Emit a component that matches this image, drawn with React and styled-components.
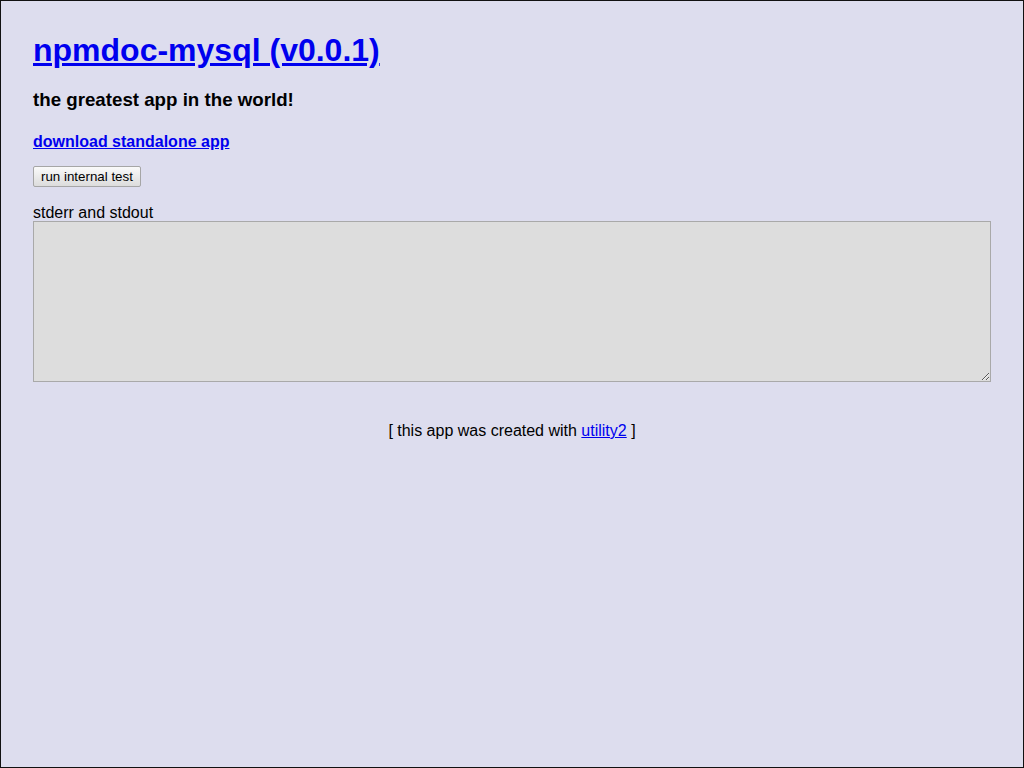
import React from "react";
import styled, { createGlobalStyle } from "styled-components";

const GlobalStyle = createGlobalStyle`
  html, body {
    margin: 0;
    padding: 0;
  }
  body {
    background: #dde;
    font-family: "Liberation Sans", Arial, Helvetica, sans-serif;
  }
`;

const Page = styled.div`
  box-sizing: border-box;
  min-height: 768px;
  border: 1px solid #111;
  padding: 31px 32px 0 32px;
  display: flex;
  flex-direction: column;
  align-items: flex-start;
`;

const Title = styled.h1`
  margin: 0;
  font-size: 32px;
  line-height: 37px;
  font-weight: bold;

  a {
    color: #00e;
  }
`;

const Tagline = styled.h3`
  margin: 20px 0 0 0;
  font-size: 18.72px;
  line-height: 22px;
  font-weight: bold;
  color: #000;
`;

const Download = styled.a`
  margin-top: 22px;
  font-size: 16px;
  line-height: 18px;
  font-weight: bold;
  color: #00e;
  text-decoration: underline;
`;

const TestButton = styled.button`
  margin-top: 15px;
  box-sizing: border-box;
  height: 21px;
  padding: 1px 7px;
  font-family: "Liberation Sans", Arial, sans-serif;
  font-size: 13.33px;
  color: #000;
  background: linear-gradient(#fafafa, #dcdcdc);
  border: 1px solid #a6a6a6;
  border-radius: 2px;
  cursor: pointer;
`;

const Label = styled.label`
  margin-top: 17px;
  font-size: 16px;
  line-height: 17px;
  color: #000;
`;

const Output = styled.textarea`
  box-sizing: border-box;
  width: 100%;
  height: 161px;
  margin: 0;
  background: #ddd;
  border: 1px solid #a9a9a9;
  font-family: "Liberation Mono", "Courier New", monospace;
  font-size: small;
  padding: 5px;
  resize: vertical;
  display: block;
`;

const Footer = styled.div`
  align-self: stretch;
  margin-top: 40px;
  text-align: center;
  font-size: 16px;
  line-height: 18px;
  color: #000;

  a {
    color: #00e;
  }
`;

export default function App() {
  return (
    <>
      <GlobalStyle />
      <Page>
        <Title>
          <a href="#">npmdoc-mysql (v0.0.1)</a>
        </Title>
        <Tagline>the greatest app in the world!</Tagline>
        <Download href="#">download standalone app</Download>
        <TestButton>run internal test</TestButton>
        <Label>stderr and stdout</Label>
        <Output readOnly />
        <Footer>
          [ this app was created with <a href="#">utility2</a> ]
        </Footer>
      </Page>
    </>
  );
}
